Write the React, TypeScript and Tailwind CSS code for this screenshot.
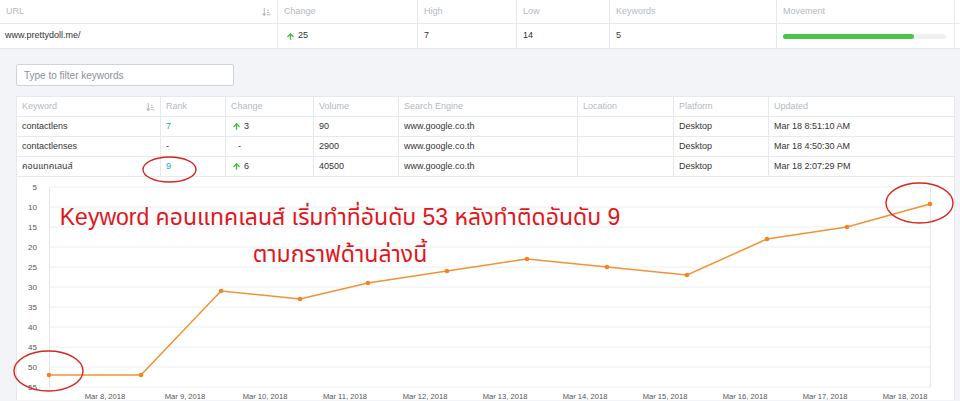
import { ArrowUp } from "lucide-react";

const topCols = ["URL", "Change", "High", "Low", "Keywords", "Movement", ""];

const keywordCols = ["Keyword", "Rank", "Change", "Volume", "Search Engine", "Location", "Platform", "Updated"];

interface KeywordRow {
    keyword: string;
    rank: string;
    change: number | null;
    volume: string;
    engine: string;
    updated: string;
}

const rows: KeywordRow[] = [
    { keyword: "contactlens", rank: "7", change: 3, volume: "90", engine: "www.google.co.th", updated: "Mar 18 8:51:10 AM" },
    { keyword: "contactlenses", rank: "-", change: null, volume: "2900", engine: "www.google.co.th", updated: "Mar 18 4:50:30 AM" },
    { keyword: "คอนแทคเลนส์", rank: "9", change: 6, volume: "40500", engine: "www.google.co.th", updated: "Mar 18 2:07:29 PM" },
];

// chart points in page pixels: [x, rank]
const points: [number, number][] = [
    [49, 52], [141, 52], [221, 31], [300, 33], [368, 29], [447, 26],
    [527, 23], [607, 25], [687, 27], [767, 18], [847, 15], [930, 9.25],
];

const rankY = (v: number) => 188 + (v - 5) * 4;

const SortIcon = () => (
    <svg width="9" height="10" viewBox="0 0 10 11" fill="none" stroke="#b3b9c5" strokeWidth="1.2">
        <path d="M2.5 1v8M0.8 7.3l1.7 2 1.7-2" />
        <path d="M5.5 3.5h2M5.5 6h3M5.5 8.5h4" />
    </svg>
);

const Up = () => <ArrowUp className="w-[9px] h-[9px] text-[#3dbb3d]" strokeWidth={3.5} />;

const TopTable = () => (
    <div className="bg-white border-b border-[#e6e9ee] text-[9px]">
        <div className="grid grid-cols-[278px_140px_99px_93px_167px_178px_1fr] border-b border-[#e6e9ee]">
            {topCols.map((c, i) => (
                <div key={i} className="h-[23px] px-[6px] flex items-center justify-between text-[#b3b9c5] border-r border-[#e6e9ee]">
                    <span>{c}</span>
                    {i === 0 && <SortIcon />}
                </div>
            ))}
        </div>
        <div className="grid grid-cols-[278px_140px_99px_93px_167px_178px_1fr] text-[#333]">
            <div className="h-[24px] px-[5px] flex items-center border-r border-[#e6e9ee]">www.prettydoll.me/</div>
            <div className="h-[24px] px-[8px] flex items-center gap-[3px] border-r border-[#e6e9ee]">
                <Up />
                <span>25</span>
            </div>
            <div className="h-[24px] px-[6px] flex items-center border-r border-[#e6e9ee]">7</div>
            <div className="h-[24px] px-[6px] flex items-center border-r border-[#e6e9ee]">14</div>
            <div className="h-[24px] px-[6px] flex items-center border-r border-[#e6e9ee]">5</div>
            <div className="h-[24px] px-[6px] flex items-center border-r border-[#e6e9ee]">
                <div className="w-[163px] h-[5px] rounded-full bg-[#eef0f3]">
                    <div className="w-[131px] h-full rounded-full bg-[#4cc64a]" />
                </div>
            </div>
            <div />
        </div>
    </div>
);

const KeywordTable = () => (
    <div className="bg-white border border-[#e6e9ee] text-[9px]">
        <div className="grid grid-cols-[144px_65px_88px_85px_179px_96px_95px_1fr] border-b border-[#e6e9ee]">
            {keywordCols.map((c, i) => (
                <div key={c} className="h-[19px] px-[5px] flex items-center justify-between text-[#b3b9c5] border-r border-[#e6e9ee] last:border-r-0">
                    <span>{c}</span>
                    {i === 0 && <SortIcon />}
                </div>
            ))}
        </div>
        {rows.map((r) => (
            <div key={r.keyword} className="grid grid-cols-[144px_65px_88px_85px_179px_96px_95px_1fr] border-b border-[#e6e9ee] last:border-b-0 text-[#333]">
                <div className="h-[19px] px-[5px] flex items-center border-r border-[#e6e9ee]">{r.keyword}</div>
                <div className={`h-[19px] px-[5px] flex items-center border-r border-[#e6e9ee] ${r.rank === "-" ? "text-[#333]" : "text-[#2a9fd6]"}`}>{r.rank}</div>
                <div className="h-[19px] px-[6px] flex items-center gap-[3px] border-r border-[#e6e9ee]">
                    {r.change === null ? <span className="pl-[6px]">-</span> : (<><Up /><span>{r.change}</span></>)}
                </div>
                <div className="h-[19px] px-[5px] flex items-center border-r border-[#e6e9ee]">{r.volume}</div>
                <div className="h-[19px] px-[5px] flex items-center border-r border-[#e6e9ee]">{r.engine}</div>
                <div className="h-[19px] px-[5px] flex items-center border-r border-[#e6e9ee]" />
                <div className="h-[19px] px-[5px] flex items-center border-r border-[#e6e9ee]">Desktop</div>
                <div className="h-[19px] px-[5px] flex items-center">{r.updated}</div>
            </div>
        ))}
    </div>
);

const Chart = () => {
    const grid = Array.from({ length: 11 }, (_, k) => 5 + k * 5);
    const dates = ["Mar 8, 2018", "Mar 9, 2018", "Mar 10, 2018", "Mar 11, 2018", "Mar 12, 2018", "Mar 13, 2018", "Mar 14, 2018", "Mar 15, 2018", "Mar 16, 2018", "Mar 17, 2018", "Mar 18, 2018"];
    const line = points.map(([x, v]) => `${x},${rankY(v)}`).join(" ");
    return (
        <div className="bg-white border-x border-[#e6e9ee]">
            <svg width="937" height="223" viewBox="17 178 937 223" className="block">
                {grid.map((v) => (
                    <g key={v}>
                        <line x1="49" x2="930" y1={rankY(v)} y2={rankY(v)} stroke="#eceef2" />
                        <text x="37" y={rankY(v) + 3} textAnchor="end" fontSize="8" fill="#555">{v}</text>
                    </g>
                ))}
                <line x1="49.5" x2="49.5" y1="188" y2="388" stroke="#e3e6eb" />
                <line x1="930.5" x2="930.5" y1="188" y2="388" stroke="#e3e6eb" />
                {dates.map((d, i) => (
                    <text key={d} x={105 + i * 80} y="399.5" textAnchor="middle" fontSize="7.6" fill="#555">{d}</text>
                ))}
                <polyline points={line} fill="none" stroke="#f39233" strokeWidth="1.5" />
                {points.map(([x, v]) => (
                    <circle key={x} cx={x} cy={rankY(v)} r="2.3" fill="#f5821f" />
                ))}
            </svg>
        </div>
    );
};

export default function App() {
    return (
        <div className="relative w-[960px] h-[401px] overflow-hidden bg-[#f3f4f8] font-['Helvetica_Neue','Liberation_Sans','Noto_Sans_Thai','Noto_Sans',sans-serif]">
            <TopTable />
            <div className="pl-[16px] pr-[5px]">
                <div className="pt-[15px] pb-[10px]">
                    <input
                        placeholder="Type to filter keywords"
                        className="block w-[218px] h-[22px] px-[7px] bg-white border border-[#cfd2d8] rounded-[2px] text-[10px] placeholder:text-[#8a8f99] outline-none"
                    />
                </div>
                <KeywordTable />
                <Chart />
            </div>

            {/* red annotation over the chart */}
            <div className="absolute left-[40px] top-[199px] w-[600px] text-center text-[23px] leading-[37px] text-[#e3151b] font-['Liberation_Sans','Noto_Sans_Thai',sans-serif]">
                <div>Keyword คอนแทคเลนส์ เริ่มทำที่อันดับ 53 หลังทำติดอันดับ 9</div>
                <div>ตามกราฟด้านล่างนี้</div>
            </div>

            <svg className="absolute inset-0 pointer-events-none" width="960" height="401">
                <ellipse cx="169.5" cy="169.5" rx="26.5" ry="12.5" fill="none" stroke="#d9261f" strokeWidth="1.4" />
                <ellipse cx="48.5" cy="371" rx="34.5" ry="20" fill="none" stroke="#d9261f" strokeWidth="1.4" />
                <ellipse cx="919.5" cy="203" rx="33.5" ry="20" fill="none" stroke="#d9261f" strokeWidth="1.4" />
            </svg>
        </div>
    );
}
